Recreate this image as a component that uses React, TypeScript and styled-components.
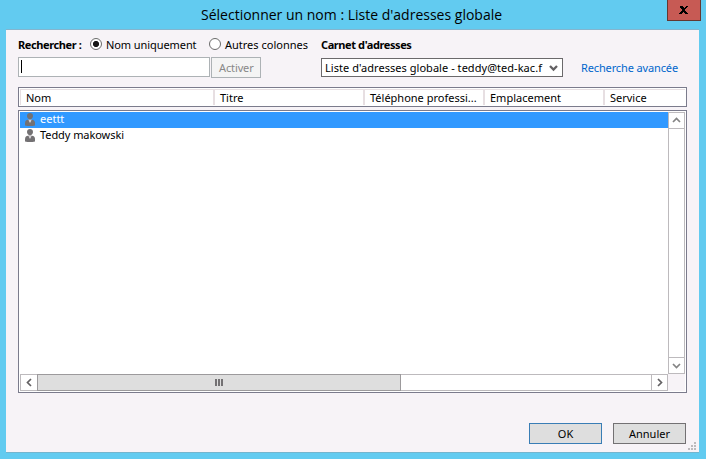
import React from "react";
import styled, { createGlobalStyle } from "styled-components";

const Global = createGlobalStyle`
  * { box-sizing: border-box; }
  body { margin: 0; overflow: hidden; }
`;

const Window = styled.div`
  width: 706px;
  height: 459px;
  background: #62cbf0;
  font-family: "Noto Sans", "Open Sans", sans-serif;
  font-size: 11px;
  line-height: 16px;
  color: #000;
  white-space: nowrap;
`;

const TitleBar = styled.header`
  height: 29px;
  display: grid;
  grid-template-columns: 201px 1fr 34px;
  padding-right: 5px;
`;

const Title = styled.h1`
  grid-column: 2;
  margin: 0;
  padding-top: 4px;
  font-family: "Open Sans", sans-serif;
  font-size: 14px;
  font-weight: 400;
  line-height: 22px;
`;

const Close = styled.button`
  height: 21px;
  padding: 0;
  border: 1px solid #633831;
  border-top: 0;
  background: #c75a54;
  display: flex;
  align-items: center;
  justify-content: center;
`;

const Client = styled.main`
  margin-left: 6px;
  width: 693px;
  height: 424px;
  padding: 7px 12px 0;
  background: #f7f3f7;
  border-top: 1px solid #84b5ce;
  border-bottom: 1px solid #73b5ce;
  display: flex;
  flex-direction: column;
`;

const Options = styled.div`
  height: 20px;
  display: grid;
  grid-template-columns: 72px 119px 112px 1fr;
  align-items: start;
`;

const Text = styled.span<{ $track?: number; $bold?: boolean }>`
  letter-spacing: ${(p) => p.$track ?? 0}px;
  font-weight: ${(p) => (p.$bold ? 700 : 400)};
`;

const Radio = styled.label`
  display: flex;
  gap: 4px;
`;

const RadioMark = styled.span<{ $on?: boolean }>`
  width: 12px;
  height: 12px;
  margin-top: 1px;
  border-radius: 50%;
  border: 1px solid #6b6b6b;
  background: ${(p) => (p.$on ? "radial-gradient(circle, #181818 0 2.7px, #fff 3.5px)" : "#fff")};
`;

const SearchRow = styled.div`
  height: 30px;
  display: flex;
  align-items: flex-start;
`;

const Field = styled.div`
  width: 192px;
  height: 20px;
  padding: 2px 2px;
  border: 1px solid #adb2b5;
  background: #fff;
`;

const Caret = styled.span`
  display: block;
  width: 1px;
  height: 13px;
  background: #000;
`;

const Activate = styled.button`
  width: 50px;
  height: 21px;
  margin-left: 1px;
  padding: 0 0 0 7px;
  border: 1px solid #adb2b5;
  background: #f4f4f4;
  color: #888;
  font: inherit;
  text-align: left;
`;

const Select = styled.div`
  width: 242px;
  height: 19px;
  margin: 1px 0 0 60px;
  padding: 0 4px 0 3px;
  border: 1px solid #6b696b;
  background: #fff;
  display: flex;
  align-items: center;
  justify-content: space-between;
`;

const Link = styled.a`
  margin: 3px 0 0 18px;
  color: #0066cc;
`;

const Columns = styled.div`
  width: 669px;
  height: 20px;
  padding: 1px;
  border: 1px solid #7b7b8c;
  background: #fff;
  display: grid;
  grid-template-columns: 195px 150px 120px 120px 1fr;
`;

const Column = styled.div`
  height: 16px;
  padding-left: 5px;
  border-top: 1px solid #e7dfe2;
  border-right: 2px solid #e7dfe2;
  line-height: 15px;
  &:first-child { border-left: 1px solid #e7dfe2; }
  &:last-child { border-right: 0; }
`;

const List = styled.section`
  width: 669px;
  height: 283px;
  margin-top: 3px;
  padding: 1px;
  border: 1px solid #7b7b8c;
  background: #fff;
  display: grid;
  grid-template-columns: 648px 17px;
  grid-template-rows: 262px 17px;
`;

const Row = styled.div<{ $selected?: boolean }>`
  height: 16px;
  padding-left: 5px;
  display: flex;
  gap: 5px;
  background: ${(p) => (p.$selected ? "#3199ff" : "#fff")};
  color: ${(p) => (p.$selected ? "#fff" : "#000")};
  line-height: 13px;
`;

const VBar = styled.div`
  border: 1px solid #bdbabd;
  display: flex;
  flex-direction: column;
  justify-content: space-between;
`;

const VArrow = styled.span<{ $down?: boolean }>`
  height: 16px;
  border-bottom: ${(p) => (p.$down ? "0" : "1px solid #bdbabd")};
  border-top: ${(p) => (p.$down ? "1px solid #bdbabd" : "0")};
  display: flex;
  align-items: center;
  justify-content: center;
`;

const HBar = styled.div`
  border: 1px solid #bdbabd;
  display: grid;
  grid-template-columns: 16px 364px 1fr 16px;
`;

const HArrow = styled.span<{ $end?: boolean }>`
  grid-column: ${(p) => (p.$end ? 4 : 1)};
  border-left: ${(p) => (p.$end ? "1px solid #bdbabd" : "0")};
  display: flex;
  align-items: center;
  justify-content: center;
`;

const Thumb = styled.span`
  margin: -1px 0;
  border: 1px solid #9c9a9c;
  background: #dedede;
  display: flex;
  align-items: center;
  justify-content: center;
  gap: 1px;
`;

const Grip = styled.i`
  width: 2px;
  height: 7px;
  background: #737173;
`;

const Corner = styled.span`
  background: #f7f3f7;
`;

const Footer = styled.footer`
  margin-top: 30px;
  padding-right: 1px;
  display: flex;
  justify-content: flex-end;
  gap: 11px;
`;

const Button = styled.button<{ $primary?: boolean }>`
  width: 73px;
  height: 21px;
  padding: 0;
  border: 1px solid ${(p) => (p.$primary ? "#397db5" : "#737173")};
  background: #dedede;
  color: #000;
  font: inherit;
`;

const ResizeSlot = styled.div`
  display: flex;
  justify-content: flex-end;
  margin: -2px -10px 0 0;
`;

const chevrons = {
  up: "M1 6 4.5 2.5 8 6",
  down: "M1 3 4.5 6.5 8 3",
  left: "M6 1 2.5 4.5 6 8",
  right: "M3 1 6.5 4.5 3 8",
};

const Chevron = ({ dir, heavy }: { dir: keyof typeof chevrons; heavy?: boolean }) => (
  <svg width="9" height="9" viewBox="0 0 9 9">
    <path
      d={chevrons[dir]}
      fill="none"
      stroke={dir === "up" || (dir === "down" && !heavy) ? "#848484" : "#636163"}
      strokeWidth={heavy ? 2.3 : 1.7}
    />
  </svg>
);

const Person = () => (
  <svg width="10" height="14" viewBox="0 0 10 14">
    <path d="M0 13.4v-2.2C0 9 1 8 3 7.8h4c2 .2 3 1.2 3 3.4v2.2q-5 1-10 0Z" fill="#737173" />
    <path d="M3.4 7.4h3.2L5.5 10.4h-1Z" fill="#d6d3d6" />
    <path d="M5 1C3.1 1 2 2.3 2 4s1.3 3.4 3 3.4S8 5.700 8 4 6.900 1 5 1Z" fill="#737173" />
  </svg>
);

const ResizeGrip = () => (
  <svg width="9" height="9" viewBox="0 0 9 9" fill="#bdbabd">
    <path d="M6 0h2v2H6zM3 3h2v2H3zM6 3h2v2H6zM0 6h2v2H0zM3 6h2v2H3zM6 6h2v2H6z" />
  </svg>
);

const columns = ["Nom", "Titre", "Téléphone professi...", "Emplacement", "Service"];

export default function App() {
  return (
    <Window>
      <Global />
      <TitleBar>
        <Title>Sélectionner un nom : Liste d'adresses globale</Title>
        <Close aria-label="Fermer">
          <svg width="10" height="8" viewBox="0 0 10 8">
            <path d="M1 0h3v1h1v1h1V1h1V0h2v1H8v1H7v1H6v2h1v1h1v1h1v1H6V7H5V6H4v1H3v1H0V7h1V6h1V5h1V3H2V2H1z" />
          </svg>
        </Close>
      </TitleBar>
      <Client>
        <Options>
          <Text $bold $track={-0.4}>Rechercher :</Text>
          <Radio><RadioMark $on /><Text $track={-0.08}>Nom uniquement</Text></Radio>
          <Radio><RadioMark /><Text>Autres colonnes</Text></Radio>
          <Text $bold $track={-0.4}>Carnet d'adresses</Text>
        </Options>
        <SearchRow>
          <Field><Caret /></Field>
          <Activate disabled><Text $track={-0.12}>Activer</Text></Activate>
          <Select>
            <Text $track={0.04}>Liste d'adresses globale - teddy@ted-kac.f</Text>
            <Chevron dir="down" heavy />
          </Select>
          <Link><Text $track={-0.13}>Recherche avancée</Text></Link>
        </SearchRow>
        <Columns>
          {columns.map((label) => <Column key={label}><Text>{label}</Text></Column>)}
        </Columns>
        <List>
          <div>
            <Row $selected><Person /><Text>eettt</Text></Row>
            <Row><Person /><Text $track={-0.07}>Teddy makowski</Text></Row>
          </div>
          <VBar>
            <VArrow><Chevron dir="up" /></VArrow>
            <VArrow $down><Chevron dir="down" /></VArrow>
          </VBar>
          <HBar>
            <HArrow><Chevron dir="left" /></HArrow>
            <Thumb><Grip /><Grip /><Grip /></Thumb>
            <HArrow $end><Chevron dir="right" /></HArrow>
          </HBar>
          <Corner />
        </List>
        <Footer>
          <Button $primary>OK</Button>
          <Button>Annuler</Button>
        </Footer>
        <ResizeSlot><ResizeGrip /></ResizeSlot>
      </Client>
    </Window>
  );
}
